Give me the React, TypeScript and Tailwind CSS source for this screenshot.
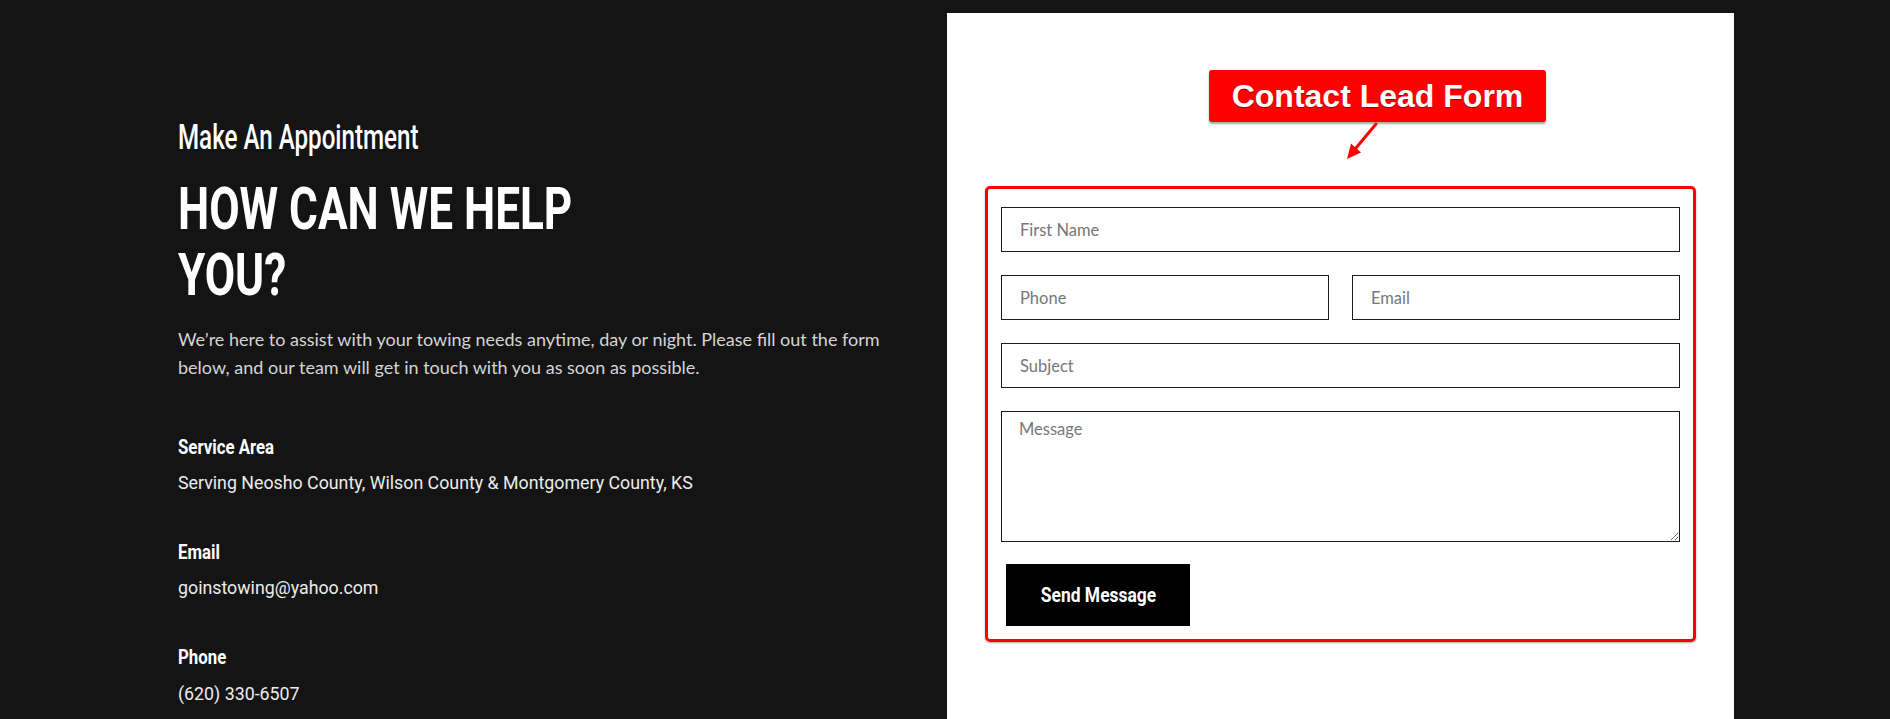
export default function App() {
  const ff = "font-['Roboto',sans-serif]";
  const inputCls =
    "w-full h-[45px] border border-[#1a1a1a] bg-white px-[18px] text-[16.5px] text-[#333] placeholder:text-[#777] font-['Lato',sans-serif] outline-none";
  const label = `${ff} block origin-left scale-x-[0.84] text-white font-bold text-[20px] leading-[24px]`;
  const value = `${ff} text-[#ececec] text-[17.8px] leading-[26px]`;
  return (
    <div className="w-full h-[719px] overflow-hidden bg-[#141414] flex">
      <div className="w-[947px] shrink-0 pl-[178px] pt-[118px] flex flex-col">
        <h3 className={`${ff} block origin-left scale-x-[0.69] text-white text-[35px] leading-[40px] font-medium whitespace-nowrap`}>
          Make An Appointment
        </h3>
        <h2 className={`${ff} block origin-left scale-x-[0.735] text-white text-[60px] leading-[66px] font-bold mt-[18px] whitespace-nowrap`}>
          HOW CAN WE HELP
          <br />
          YOU?
        </h2>
        <p className="font-['Lato',sans-serif] text-[18px] leading-[28px] text-[#d4d4d4] mt-[17px] whitespace-nowrap">
          We’re here to assist with your towing needs anytime, day or night. Please fill out the form
          <br />
          below, and our team will get in touch with you as soon as possible.
        </p>
        <div className="mt-[54px] flex flex-col">
          <div className={label}>Service Area</div>
          <div className={`${value} mt-[11px]`}>Serving Neosho County, Wilson County &amp; Montgomery County, KS</div>
        </div>
        <div className="mt-[44px] flex flex-col">
          <div className={label}>Email</div>
          <div className={`${value} mt-[11px]`}>goinstowing@yahoo.com</div>
        </div>
        <div className="mt-[44px] flex flex-col">
          <div className={label}>Phone</div>
          <div className={`${value} mt-[12px]`}>(620) 330-6507</div>
        </div>
      </div>

      <div className="relative shrink-0 mt-[13px] w-[787px] h-[720px] bg-white px-[38px] pt-[173px]">
        <div className="absolute left-[262px] top-[57px] w-[337px] h-[52px] bg-[#ff0000] rounded-[3px] flex items-center justify-center text-white font-bold text-[32px] font-['Liberation_Sans',Arial,sans-serif] shadow-[0_2px_2px_rgba(0,0,0,0.35)] [text-shadow:0_1px_1px_rgba(0,0,0,0.35)]">
          Contact Lead Form
        </div>
        <svg
          className="absolute left-[395px] top-[105px]"
          width="40"
          height="45"
          viewBox="0 0 40 45"
        >
          <line x1="34" y1="6" x2="14" y2="30" stroke="#ff0000" strokeWidth="3" strokeLinecap="round" />
          <polygon points="5,41 19,34.5 9,25.5" fill="#ff0000" />
        </svg>

        <div className="border-[3px] border-[#ff0000] rounded-[5px] px-[13px] pt-[18px] pb-[13px] flex flex-col gap-[23px] shadow-[0_1px_2px_rgba(0,0,0,0.35)]">
          <input className={inputCls} placeholder="First Name" />
          <div className="flex gap-[23px]">
            <input className={inputCls} placeholder="Phone" />
            <input className={inputCls} placeholder="Email" />
          </div>
          <input className={inputCls} placeholder="Subject" />
          <textarea
            className="w-full h-[131px] border border-[#1a1a1a] bg-white px-[17px] pt-[5px] pb-[5px] text-[16.5px] text-[#333] placeholder:text-[#777] font-['Lato',sans-serif] outline-none block"
            placeholder="Message"
          />
          <button className="ml-[5px] -mt-px w-[184px] h-[62px] bg-black flex items-center justify-center">
            <span className={`${ff} inline-block scale-x-[0.83] text-white font-bold text-[21px] leading-[24px] whitespace-nowrap`}>
              Send Message
            </span>
          </button>
        </div>
      </div>
    </div>
  );
}
